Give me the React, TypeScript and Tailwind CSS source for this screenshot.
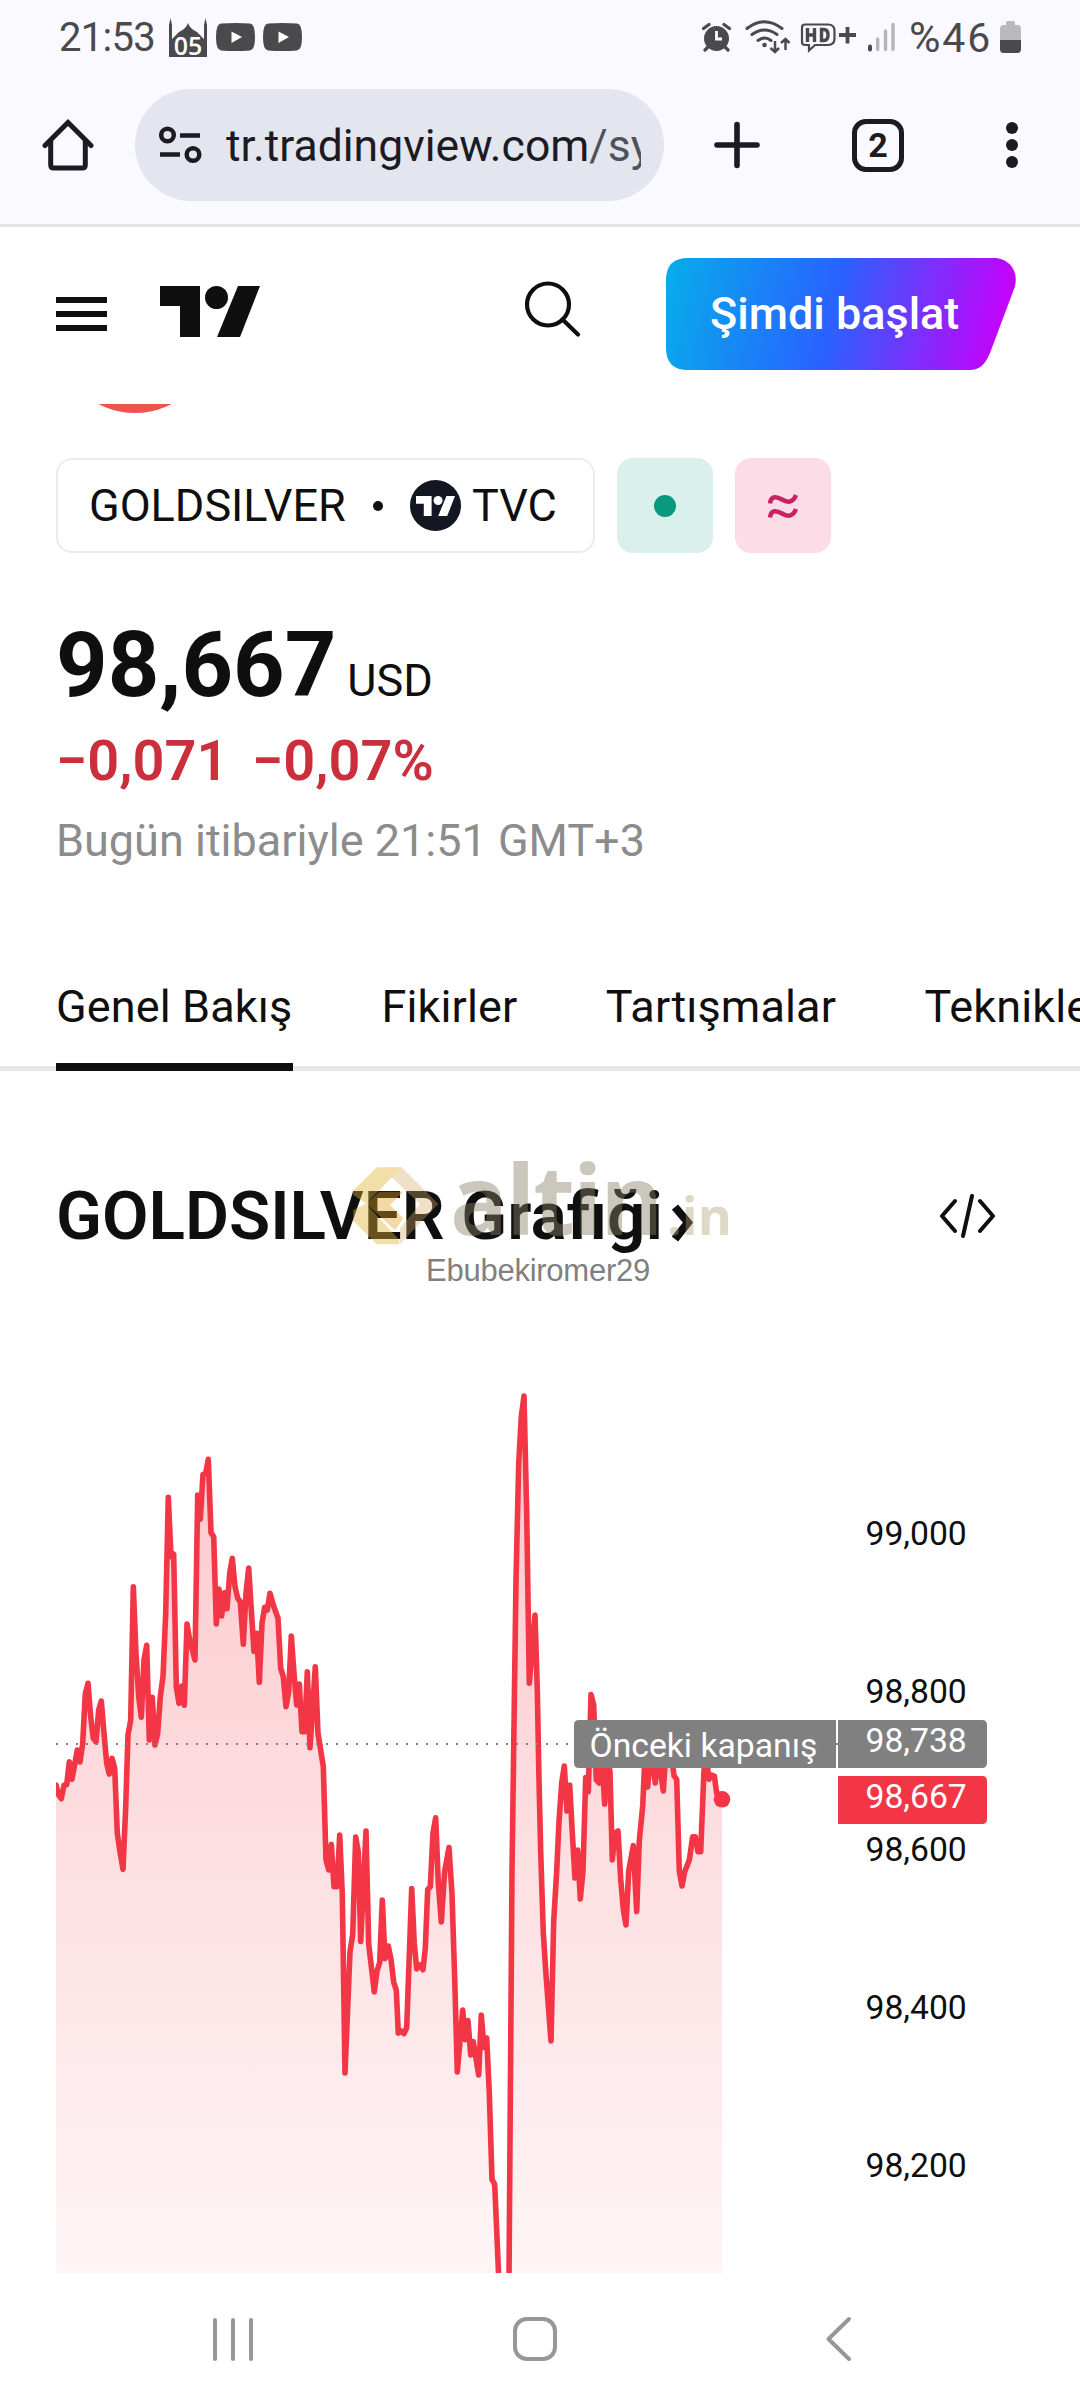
import type { ReactNode } from 'react';

const AXIS_LABELS = [
  { label: '99,000', y: 1533 },
  { label: '98,800', y: 1691 },
  { label: '98,600', y: 1849 },
  { label: '98,400', y: 2007 },
  { label: '98,200', y: 2165 },
];

const TABS = ['Genel Bakış', 'Fikirler', 'Tartışmalar', 'Teknikler'];

const CHART_TOP = 1380;
const CHART_BOTTOM = 2273;

const PRICE_POINTS: [number, number][] = [
  [56, 1785], [58.7, 1795], [61.3, 1798.7], [64, 1785.3], [66.7, 1784.7], [69.3, 1761.7],
  [72, 1779.3], [77.3, 1750], [80, 1762], [82.7, 1743.3], [85.3, 1694], [88, 1683.3],
  [90.7, 1716.7], [93.3, 1738.3], [96, 1741.7], [98.7, 1710], [101.3, 1701], [104, 1733.3],
  [106.7, 1763.3], [109.3, 1774], [112, 1758.3], [114.7, 1768.3], [117.3, 1833.3], [120, 1851.7],
  [123, 1869.3], [125.7, 1806.7], [128, 1735], [130.7, 1720], [133.3, 1586.7], [136, 1653.3],
  [138.7, 1696.7], [141.3, 1717.3], [144, 1660], [146.7, 1645.3], [149.3, 1740], [152.3, 1697.3],
  [155, 1745], [157.7, 1733.3], [160.3, 1696.7], [163, 1676.7], [165.7, 1613.3], [168.3, 1497.3],
  [171, 1556.7], [173.7, 1554.3], [176.3, 1686.7], [179, 1703.3], [181.7, 1686], [184.3, 1705.3],
  [187, 1624], [189.7, 1640], [195, 1660], [197.7, 1495], [200.3, 1519.3], [203, 1474.3],
  [205.7, 1473.3], [208.3, 1459.3], [211, 1532.7], [213.7, 1536.7], [216.3, 1624], [219, 1589],
  [221.7, 1616], [224.3, 1592.7], [227, 1608.7], [229.7, 1573.3], [232.3, 1558.3], [235, 1586.7],
  [237.7, 1598.3], [240.3, 1601.7], [243.3, 1644.3], [246, 1593.3], [248.7, 1568], [251.3, 1610],
  [254, 1651.3], [256.7, 1633.3], [259.3, 1682.3], [262, 1623.3], [264.7, 1607.3], [267.3, 1610],
  [270, 1593.3], [273.3, 1605], [278, 1618.3], [280.7, 1668.3], [283.3, 1676.7], [286, 1706.7],
  [288.7, 1691.7], [291.3, 1636], [294, 1673.3], [296.7, 1705], [299.3, 1684], [302, 1731.7],
  [304.7, 1731.7], [307.3, 1671.7], [310, 1747.7], [315.3, 1666.7], [318, 1733.3], [323.3, 1766.7],
  [326, 1860], [328.7, 1870], [331.3, 1844.3], [334, 1886.6], [337, 1886.6], [339.7, 1835],
  [342.3, 1894], [345, 2073], [350, 1951.7], [352.7, 1934.5], [355.7, 1837], [358.3, 1852],
  [360.7, 1941.4], [366, 1831], [368.7, 1944], [374.3, 1992], [377, 1971], [379.7, 1962.5],
  [382.3, 1900], [385, 1958.6], [388.3, 1946], [391, 1959.4], [393.7, 1982.3], [396.3, 1990],
  [398.3, 2033], [401, 2031], [404, 2033.6], [406.7, 2027.5], [411.7, 1888.6], [414.3, 1944],
  [416.7, 1969], [420, 1965], [423, 1969.7], [425.3, 1948], [427.7, 1889.7], [430.3, 1886.7],
  [433, 1833], [435.7, 1817.8], [438.3, 1882.8], [441.3, 1922], [444.7, 1871], [449, 1847.6],
  [452, 1894], [454.7, 1978.5], [457.3, 2072], [462.7, 2010], [465.3, 2039.7], [468, 2020.6],
  [470.7, 2055], [473.3, 2041.6], [478.7, 2075], [481.3, 2015], [484, 2047.4], [486.7, 2038],
  [489.3, 2093], [492, 2179.4], [494.7, 2184.4], [498.7, 2277], [500, 2310], [508, 2310],
  [509, 2277], [512, 1871], [513.3, 1776.7], [516, 1580], [518.7, 1463.3], [521.3, 1416.7],
  [524, 1396], [526.7, 1513], [529.3, 1683.3], [535, 1615], [537.3, 1690], [539, 1780],
  [540.7, 1852], [543.3, 1932.6], [546, 1974.7], [551, 2041], [553.7, 1921], [556.7, 1871],
  [559, 1821.6], [561.7, 1783], [564.3, 1766], [567, 1811], [569.7, 1785], [572.3, 1833],
  [575, 1878], [577.7, 1850], [580.3, 1899], [583, 1871], [585.7, 1777.6], [588.3, 1792],
  [591, 1694.5], [593.7, 1705], [596.3, 1780], [599, 1783], [601.7, 1756], [604.7, 1804],
  [607.3, 1756], [610, 1772], [612.3, 1860], [615, 1833], [618, 1831], [620.7, 1879],
  [623.3, 1909.6], [626, 1925], [628.7, 1871], [633.3, 1845.7], [636.7, 1911.5], [639.3, 1841],
  [642.7, 1806], [645, 1756], [647.7, 1787], [650.3, 1750], [655.3, 1783], [658, 1753],
  [663.3, 1791], [666.7, 1740], [671.7, 1756], [674, 1775.7], [676.7, 1779.5], [679.3, 1871],
  [682, 1886], [684.7, 1871.7], [689.3, 1860], [692.7, 1836.7], [695.3, 1836.7], [698, 1851.7],
  [700.7, 1851.7], [704, 1770], [706.7, 1760], [709, 1779.3], [711.7, 1775], [714.3, 1776],
  [716.7, 1793.3], [722, 1799.3],
];

const linePath = 'M' + PRICE_POINTS.map(([x, y]) => `${x} ${y}`).join('L');
const areaPath = `${linePath}L722 2310L56 2310Z`;

function TvLogo({ className }: { className: string }) {
  return (
    <svg className={className} viewBox="0 0 100 51" fill="currentColor">
      <path d="M0 0H40V51H20V20H0Z" />
      <circle cx="56.5" cy="11.5" r="11.5" />
      <path d="M78 0H100L80 51H57Z" />
    </svg>
  );
}

function MosqueIcon() {
  return (
    <svg className="h-[41px] w-[39px] overflow-visible" viewBox="0 0 39 41">
      <path
        d="M0 40V8L1.500 1L3 8V22L10 15Q17 12 19 6Q21 12 28 15L35 22V8L36.500 1L38 8V40Z"
        fill="#4a4a4c"
      />
      <text
        x="19"
        y="38"
        textAnchor="middle"
        className="fill-white font-['Open_Sans',sans-serif] text-[25px] font-semibold"
      >
        05
      </text>
    </svg>
  );
}

function VideoIcon() {
  return (
    <svg className="h-[28px] w-[39px]" viewBox="0 0 39 28">
      <path d="M5 .6Q19.500 -.6 34 .6Q39 1 39 14Q39 27 34 27.400Q19.500 28.600 5 27.400Q0 27 0 14Q0 1 5 .6Z" fill="#4a4a4c" />
      <path d="M15.500 8.500L26 14L15.500 20Z" fill="#fff" />
    </svg>
  );
}

function StatusBar() {
  return (
    <div className="flex h-[74px] items-center pr-[59px] pl-[59px] text-[#4a4a4c]">
      <span className="mt-[2px] w-[110px] text-[40px] leading-none tracking-[-0.7px]">21:53</span>
      <div className="flex items-center gap-[8px]">
        <MosqueIcon />
        <VideoIcon />
        <VideoIcon />
      </div>
      <div className="ml-auto flex items-center">
        <svg className="h-[40px] w-[194px]" viewBox="702 17 194 40" fill="none" stroke="#4a4a4c">
          {/* alarm */}
          <circle cx="716.500" cy="38.500" r="12.500" fill="#4a4a4c" stroke="none" />
          <path d="M703.500 28.500L709 24.500M729.500 28.500L724 24.500M708 47L705 50M725 47L728 50" strokeWidth="3.200" strokeLinecap="round" />
          <path d="M716.500 31V39H722" stroke="#fff" strokeWidth="2.800" />
          {/* wifi */}
          <path d="M747 28.500Q764 15 782 28.500M752 34.500Q764.500 25.500 777 34.500M758 40.500Q765 35.500 771 40.500" strokeWidth="3" strokeLinecap="round" />
          <circle cx="764.500" cy="45" r="2.300" fill="#4a4a4c" stroke="none" />
          <path d="M775 41V52M770.500 48L775 52L779 48M785.500 50V39M781 43L785.500 39L789.500 43" strokeWidth="2.500" />
          {/* HD voice */}
          <path d="M805 24.500H828Q834.500 24.500 834.500 31V38.500Q834.500 45 828 45H815L809 50.500V45H805Q802 45 802 42V27.500Q802 24.500 805 24.500Z" strokeWidth="2.200" />
          <path d="M807.500 28V42M814.500 28V42M807.500 35H814.500" strokeWidth="3.400" />
          <path d="M821.500 29.500V40.500H824Q828 40.500 828 35Q828 29.500 824 29.500Z" strokeWidth="3.400" />
          <path d="M839 35H856M847.500 27V43.500" strokeWidth="3.800" />
          {/* signal */}
          <path d="M870 46.500V49.500" strokeWidth="4" strokeLinecap="round" />
          <path d="M877.700 39V49.500M885.500 31V49.500M893 24.500V49.500" stroke="#b5b5b8" strokeWidth="3.400" strokeLinecap="round" />
        </svg>
        <span className="ml-[13px] w-[91px] text-[41px] leading-none tracking-[1.8px] whitespace-nowrap">
          <span className="text-[43px]">%</span>46
        </span>
        <svg className="h-[32px] w-[21px]" viewBox="0 0 21 32">
          <path d="M6 1.500Q6 0 7.500 0H13.500Q15 0 15 1.500V4H17.500Q21 4 21 8V19H0V8Q0 4 3.500 4H6Z" fill="#b9b9bb" />
          <path d="M0 19H21V28Q21 32 17.500 32H3.500Q0 32 0 28Z" fill="#4a4a4c" />
        </svg>
      </div>
    </div>
  );
}

function BrowserBar() {
  return (
    <div className="flex h-[142px] items-center text-[#1b1b21]">
      <svg className="ml-[42px] h-[54px] w-[52px]" viewBox="0 0 52 54" fill="none" stroke="currentColor" strokeWidth="5" strokeLinejoin="round">
        <path d="M3 27.500L26 4.500L49 27.500" strokeLinecap="round" strokeLinejoin="miter" />
        <path d="M8.700 22V47Q8.700 50 11.700 50H40.300Q43.300 50 43.300 47V22" />
      </svg>
      <div className="ml-[41px] flex h-[112px] w-[529px] items-center rounded-full bg-[#e3e5ef] pl-[24px]">
        <svg className="h-[38px] w-[44px] shrink-0" viewBox="0 0 44 38" fill="none" stroke="currentColor" strokeWidth="4.500">
          <circle cx="8.500" cy="9" r="6.300" />
          <path d="M21 9.500H41M1 28.500H21" />
          <circle cx="34" cy="28.500" r="6.300" />
        </svg>
        <div className="mt-[2px] ml-[23px] w-[415px] overflow-hidden text-[44.5px] leading-[64px] whitespace-nowrap">
          tr.tradingview.com<span className="text-[#50525a]">/sy</span>
        </div>
      </div>
      <svg className="ml-[50px] h-[48px] w-[46px]" viewBox="0 0 46 48" stroke="currentColor" strokeWidth="5.600" strokeLinecap="round">
        <path d="M3 24H43M23 3.500V44.500" />
      </svg>
      <div className="ml-[92px] flex h-[53px] w-[52px] items-center justify-center rounded-[14px] border-[5.500px] border-current text-[34px] leading-none font-bold">
        2
      </div>
      <div className="ml-[102px] flex flex-col gap-[5px]">
        <span className="size-[12px] rounded-full bg-current" />
        <span className="size-[12px] rounded-full bg-current" />
        <span className="size-[12px] rounded-full bg-current" />
      </div>
    </div>
  );
}

function SiteHeader() {
  return (
    <header className="flex h-[177px] items-center pr-[64px] pb-[3px] pl-[56px]">
      <div className="flex flex-col gap-[8.300px]">
        <span className="h-[6px] w-[51px] bg-[#0f0f0f]" />
        <span className="h-[6px] w-[51px] bg-[#0f0f0f]" />
        <span className="h-[6px] w-[51px] bg-[#0f0f0f]" />
      </div>
      <TvLogo className="mb-[5px] ml-[53px] h-[51px] w-[100px]" />
      <svg className="mb-[11px] ml-[264px] h-[58px] w-[58px]" viewBox="0 0 58 58" fill="none" stroke="currentColor" strokeWidth="4.200">
        <circle cx="24" cy="24.500" r="21" />
        <path d="M38.500 39.500L54 54.500" strokeLinecap="round" />
      </svg>
      <div className="relative ml-auto flex h-[112px] w-[350px] items-center pl-[44px]">
        <svg className="absolute inset-0 h-[112px] w-[350px]" viewBox="0 0 350 112">
          <defs>
            <linearGradient id="cta" gradientUnits="userSpaceOnUse" x1="-5" y1="20" x2="335" y2="98">
              <stop offset="0" stopColor="#06aeea" />
              <stop offset="0.5" stopColor="#2962ff" />
              <stop offset="1" stopColor="#c800fa" />
            </linearGradient>
          </defs>
          <path
            d="M22 0H328C344 0 354 15 348 31L324 95C319 107 313 112 304 112H22Q0 112 0 90V22Q0 0 22 0Z"
            fill="url(#cta)"
          />
        </svg>
        <span className="relative mb-[2px] text-[45px] leading-none font-medium text-white">Şimdi başlat</span>
      </div>
    </header>
  );
}

function Badge({ className, children }: { className: string; children: ReactNode }) {
  return <div className={`flex w-[96px] items-center justify-center rounded-[16px] ${className}`}>{children}</div>;
}

function SymbolSummary() {
  return (
    <section className="pl-[56px]">
      <div className="h-[9px] overflow-hidden">
        <div className="mt-[-149px] size-[158px] rounded-full bg-[#ef5350]" />
      </div>
      <div className="mt-[45px] flex h-[95px] gap-[22px]">
        <div className="flex w-[539px] items-center rounded-[16px] border-2 border-[#ebebeb] pl-[31px] text-[45px] leading-none">
          <span className="w-[284px]">GOLDSILVER</span>
          <span className="size-[10px] rounded-full bg-[#0f0f0f]" />
          <span className="ml-[27px] flex size-[51px] items-center justify-center rounded-full bg-[#131722] text-white">
            <TvLogo className="h-[20px] w-[39px]" />
          </span>
          <span className="ml-[11px]">TVC</span>
        </div>
        <Badge className="bg-[#daf0ec]">
          <span className="size-[22px] rounded-full bg-[#089981]" />
        </Badge>
        <Badge className="bg-[#fbdce7]">
          <svg className="h-[24px] w-[30px]" viewBox="0 0 30 24" fill="none" stroke="#cc2160" strokeWidth="4.500">
            <path d="M2 9.500C3 1 9 2.500 14 5.500S25 9.500 28 1M2 23.500C3 15 9 16.500 14 19.500S25 23.500 28 15" />
          </svg>
        </Badge>
      </div>
      <div className="mt-[63px] flex h-[100px] items-baseline leading-[100px]">
        <span className="text-[90px] font-bold">98,667</span>
        <span className="ml-[11px] text-[45px]">USD</span>
      </div>
      <div className="mt-[15px] flex text-[56px] leading-[60px] font-semibold text-[#cc2f3c]">
        <span className="w-[196px]">−0,071</span>
        <span>−0,07%</span>
      </div>
      <div className="mt-[24px] text-[45px] leading-[52px] text-[#8c8c8c]">Bugün itibariyle 21:51 GMT+3</div>
    </section>
  );
}

function TabBar() {
  return (
    <nav className="mt-[113px] flex h-[91px] gap-[88.500px] border-b-[5px] border-[#e8e8e8] pl-[56px] text-[45px] leading-[54px] tracking-[0.12px] whitespace-nowrap">
      {TABS.map((tab, i) => (
        <span
          key={tab}
          className={i === 0 ? 'h-[91px] w-[237px] shrink-0 border-b-[8px] border-[#0f0f0f]' : 'shrink-0'}
        >
          {tab}
        </span>
      ))}
    </nav>
  );
}

function Watermark() {
  return (
    <div className="absolute top-[-31px] left-[340px] h-[150px] w-[410px]">
      <svg className="absolute top-0 left-0 h-[105px] w-[110px]" viewBox="0 0 330 315">
        <path d="M110 67H185L78 176L40 150V137Z" fill="#e0b030" fillOpacity="0.42" />
        <path d="M40 195L78 176L178 285V298H110L40 228Z" fill="#e0b030" fillOpacity="0.42" />
        <path d="M185 67L295 177L180 297V250L240 177L155 97Z" fill="#d2aa64" fillOpacity="0.36" />
        <path d="M78 176L118 140H190L150 180L190 220L165 255Z" fill="#e0a020" fillOpacity="0.4" />
      </svg>
      <span className="absolute top-[5px] left-[110px] font-['Open_Sans',sans-serif] text-[96px] leading-none font-bold tracking-[-2px] text-[#8c8068]/44">
        altin
      </span>
      <span className="absolute top-[44px] left-[327px] font-['Open_Sans',sans-serif] text-[52px] leading-none font-bold text-[#ad9f70]/40">
        .in
      </span>
      <span className="absolute top-[109px] left-[86px] font-['Liberation_Sans',Arial,sans-serif] text-[31px] leading-[34px] tracking-[-0.25px] text-[#808080]">
        Ebubekiromer29
      </span>
    </div>
  );
}

function ChartHeading() {
  return (
    <div className="relative mt-[105px] flex h-[80px] items-center pr-[84px] pl-[56px]">
      <h2 className="text-[67.500px] leading-[80px] font-semibold">GOLDSILVER Grafiği</h2>
      <svg className="mt-[14px] ml-[9px] h-[38px] w-[23px]" viewBox="0 0 23 38" fill="none" stroke="currentColor" strokeWidth="8">
        <path d="M3 3L16 18.500L3 35" />
      </svg>
      <svg className="ml-auto h-[44px] w-[57px]" viewBox="0 0 57 44" fill="none" stroke="currentColor" strokeWidth="4" strokeLinecap="round" strokeLinejoin="round">
        <path d="M16 7L3 22L16 37M41 7L54 22L41 37M33 2L24 42" />
      </svg>
      <Watermark />
    </div>
  );
}

function PriceChart() {
  return (
    <svg
      className="mt-[124px] block h-[893px] w-[1080px] font-['Roboto',sans-serif] text-[33.700px]"
      viewBox={`0 ${CHART_TOP} 1080 ${CHART_BOTTOM - CHART_TOP}`}
    >
      <defs>
        <linearGradient id="area" gradientUnits="userSpaceOnUse" x1="0" y1="1396" x2="0" y2={CHART_BOTTOM}>
          <stop offset="0" stopColor="#f23645" stopOpacity="0.28" />
          <stop offset="1" stopColor="#f23645" stopOpacity="0.05" />
        </linearGradient>
        <clipPath id="plot">
          <rect x="56" y={CHART_TOP} width="690" height={CHART_BOTTOM - CHART_TOP} />
        </clipPath>
      </defs>
      <g clipPath="url(#plot)">
        <path d={areaPath} fill="url(#area)" />
        <path d={linePath} fill="none" stroke="#f23645" strokeWidth="5.600" strokeLinejoin="round" strokeLinecap="round" />
        <circle cx="722" cy="1799.300" r="8.300" fill="#f23645" />
      </g>
      <path d="M56 1744H838" stroke="#808080" strokeWidth="2" strokeDasharray="2 8" />

      {AXIS_LABELS.map(({ label, y }) => (
        <text key={label} x="865.5" y={y + 12} fill="#0f0f0f">
          {label}
        </text>
      ))}

      <path d="M579 1720H836V1768H579Q574 1768 574 1763V1725Q574 1720 579 1720Z" fill="#808080" />
      <path d="M838 1720H982Q987 1720 987 1725V1763Q987 1768 982 1768H838Z" fill="#808080" />
      <path d="M838 1776H982Q987 1776 987 1781V1819Q987 1824 982 1824H838Z" fill="#f23645" />
      <text x="589.5" y="1757" fill="#fff">
        Önceki kapanış
      </text>
      <text x="865.5" y="1752" fill="#fff">
        98,738
      </text>
      <text x="865.5" y="1808" fill="#fff">
        98,667
      </text>
    </svg>
  );
}

function SystemNav() {
  return (
    <div className="flex h-[132px] items-center pl-[213px] text-[#979797]">
      <div className="flex gap-[14px]">
        <span className="h-[43px] w-[4px] rounded-full bg-current" />
        <span className="h-[43px] w-[4px] rounded-full bg-current" />
        <span className="h-[43px] w-[4px] rounded-full bg-current" />
      </div>
      <div className="ml-[260px] h-[44px] w-[44px] rounded-[14px] border-4 border-current" />
      <svg className="ml-[268px] h-[46px] w-[27px]" viewBox="0 0 27 46" fill="none" stroke="currentColor" strokeWidth="4" strokeLinecap="round" strokeLinejoin="round">
        <path d="M24 3L3.500 23L24 43" />
      </svg>
    </div>
  );
}

export default function App() {
  return (
    <div className="h-[2408px] w-[1080px] overflow-hidden bg-white font-['Roboto',sans-serif] text-[#0f0f0f]">
      <div className="h-[227px] border-b-[3px] border-[#e5e5e6] bg-[#faf9ff]">
        <StatusBar />
        <BrowserBar />
      </div>
      <SiteHeader />
      <SymbolSummary />
      <TabBar />
      <ChartHeading />
      <PriceChart />
      <SystemNav />
    </div>
  );
}
